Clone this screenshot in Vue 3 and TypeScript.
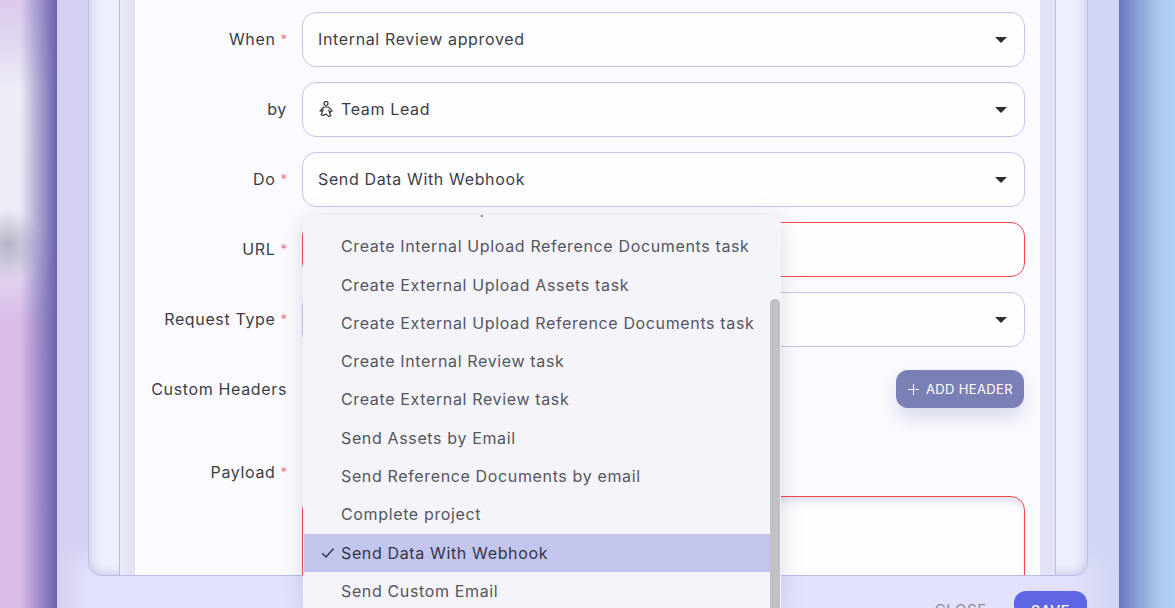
<script setup lang="ts">
interface Field {
  label: string
  required: boolean
  value: string
  icon?: boolean
  caret: boolean
  invalid?: boolean
}

const fields: Field[] = [
  { label: 'When', required: true, value: 'Internal Review approved', caret: true },
  { label: 'by', required: false, value: 'Team Lead', icon: true, caret: true },
  { label: 'Do', required: true, value: 'Send Data With Webhook', caret: true },
  { label: 'URL', required: true, value: '', caret: false, invalid: true },
  { label: 'Request Type', required: true, value: '', caret: true },
]

const options: string[] = [
  'Create Internal Upload Assets task',
  'Create Internal Upload Reference Documents task',
  'Create External Upload Assets task',
  'Create External Upload Reference Documents task',
  'Create Internal Review task',
  'Create External Review task',
  'Send Assets by Email',
  'Send Reference Documents by email',
  'Complete project',
  'Send Data With Webhook',
  'Send Custom Email',
]
const selected = 'Send Data With Webhook'
</script>

<template>
  <div class="page">
    <div class="backdrop-left"></div>
    <div class="modal">
      <div class="panel">
        <div class="gutter">
          <div class="card">
            <div v-for="f in fields" :key="f.label" class="row">
              <div class="label">
                {{ f.label }}<span v-if="f.required" class="req">*</span>
              </div>
              <div class="control" :class="{ invalid: f.invalid }">
                <svg v-if="f.icon" class="person" viewBox="0 0 14 16" width="14" height="16" fill="none" stroke="#35353c" stroke-width="1.2">
                  <circle cx="7" cy="2.5" r="2" />
                  <path d="M4.4 6h5.2l3.4 3.9-1.7 1.3-1.2-1.2.6 2.2 1.1 2.5-1.9.9L7 12.9l-2.9 1.7-1.9-.9 1.1-2.5.6-2.2-1.2 1.2L1 9.9z" />
                </svg>
                <span class="value">{{ f.value }}</span>
                <span v-if="f.caret" class="caret"></span>
              </div>
            </div>

            <div class="row headers">
              <div class="label">Custom Headers</div>
              <div class="headers-body">
                <button class="add-btn" type="button">
                  <svg viewBox="0 0 14 14" width="13" height="13" fill="none" stroke="#fff" stroke-width="1.1">
                    <path d="M7 1v12M1 7h12" />
                  </svg>
                  ADD HEADER
                </button>
              </div>
            </div>

            <div class="row payload">
              <div class="label">Payload<span class="req">*</span></div>
              <div class="editor"></div>
            </div>
          </div>
        </div>
      </div>
      <div class="footer">
        <span class="close">CLOSE</span>
        <button class="save" type="button">SAVE</button>
      </div>

      <div class="menu">
        <ul class="menu-list">
          <li v-for="o in options" :key="o" class="option" :class="{ active: o === selected }">
            <svg v-if="o === selected" class="check" viewBox="0 0 14 12" width="14" height="12" fill="none" stroke="#34344a" stroke-width="1.5">
              <path d="M1.2 6.4 5 10 12.6 1.6" />
            </svg>
            {{ o }}
          </li>
        </ul>
        <div class="thumb"></div>
      </div>
    </div>
    <div class="backdrop-right"></div>
  </div>
</template>

<style>
html, body { margin: 0; overflow: hidden; }
</style>

<style scoped>
.page {
  display: flex;
  width: 1175px;
  height: 608px;
  overflow: hidden;
  font-family: "Inter", "Open Sans", sans-serif;
  letter-spacing: 0.64px;
  color: #3d3d47;
}
.backdrop-left {
  width: 57px;
  flex: none;
  background:
    linear-gradient(90deg, rgba(106, 98, 173, 0) 35%, #6a62ad 100%),
    radial-gradient(34px 36px at 8px 245px, #b4b4c6, rgba(185, 185, 201, 0) 100%),
    linear-gradient(180deg, #dccbec 0, #e0d6f0 40px, #efecf7 90px, #ecebf6 230px, #e2d6ef 270px, #d9bce8 320px, #d9bbe8 100%);
}
.backdrop-right {
  width: 56px;
  flex: none;
  background: linear-gradient(90deg, #6576bb 0, #8ba2d6 35%, #aecbee 75%, #aed2f2 100%);
}
.modal {
  position: relative;
  flex: none;
  width: 1062px;
  display: flex;
  flex-direction: column;
  background:
    linear-gradient(90deg, #d4d0f1 0, rgba(212, 208, 241, 0) 32px),
    linear-gradient(270deg, #cfd5f3 0, rgba(207, 213, 243, 0) 50px),
    linear-gradient(180deg, rgba(226, 226, 252, 0) 0, rgba(226, 226, 252, 0) 540px, #e3e2fc 578px),
    linear-gradient(90deg, #d4d0f1 0, #d0d6f3 100%);
}
.panel {
  height: 596px;
  flex: none;
  margin: -20px 31px 0;
  box-sizing: border-box;
  border: 1px solid #bcbce8;
  border-top: 0;
  border-radius: 0 0 14px 14px;
  background: #eef0fd;
  box-shadow: inset 0 0 12px rgba(150, 150, 205, 0.55);
  padding: 0 31px 0 30px;
  overflow: hidden;
}
.gutter {
  height: 100%;
  box-sizing: border-box;
  border-left: 1px solid #bcbce8;
  border-right: 1px solid #bcbce8;
  background: linear-gradient(90deg, #e8e9fa 0, #dfe1f5 15px, #e0e2f6 100%);
  padding: 0 15px;
}
.card {
  height: 100%;
  box-sizing: border-box;
  background: #fbfbff;
  padding: 32px 15px 0 0;
  overflow: hidden;
}
.row {
  display: flex;
  gap: 15px;
  margin-bottom: 15px;
}
.label {
  width: 152px;
  flex: none;
  text-align: right;
  font-size: 16px;
  line-height: 55px;
  white-space: nowrap;
}
.req {
  color: #f2788a;
  font-size: 13px;
  margin-left: 5px;
  vertical-align: 1px;
  letter-spacing: 0;
}
.control {
  flex: 1;
  height: 55px;
  box-sizing: border-box;
  display: flex;
  align-items: center;
  padding: 0 15px 2px;
  background: #fffeff;
  border: 1px solid #c3c4ee;
  border-radius: 14px;
  font-size: 16px;
}
.control.invalid { border-color: #f5484d; }
.person { margin: 0 8px 0 1px; flex: none; }
.value { flex: 1; white-space: nowrap; }
.caret {
  width: 0;
  height: 0;
  margin: 2px 2px 0 0;
  border-left: 6px solid transparent;
  border-right: 6px solid transparent;
  border-top: 6px solid #2c2c30;
}
.headers { margin: 0; height: 83px; }
.headers .label { line-height: 38px; margin-top: 8px; }
.headers-body {
  flex: 1;
  display: flex;
  justify-content: flex-end;
  padding: 8px 1px 0 0;
  align-items: flex-start;
}
.add-btn {
  display: flex;
  align-items: center;
  gap: 6px;
  height: 38px;
  width: 128px;
  box-sizing: border-box;
  justify-content: center;
  padding: 0;
  border: 0;
  border-radius: 12px;
  background: #7a80b6;
  color: #fff;
  font-family: inherit;
  font-size: 13px;
  letter-spacing: 0.35px;
  box-shadow: 0 10px 20px rgba(122, 128, 182, 0.28);
}
.payload { margin: 0; }
.payload .label { line-height: 22px; margin-top: 16px; }
.editor {
  flex: 1;
  height: 200px;
  margin-top: 51px;
  box-sizing: border-box;
  border: 1px solid #f5484d;
  border-radius: 14px;
  background: #fefeff;
  box-shadow: inset 0 8px 12px -6px rgba(120, 120, 180, 0.35);
}
.footer {
  flex: 1;
  display: flex;
  justify-content: flex-end;
  align-items: flex-start;
  gap: 27px;
  padding: 15px 32px 0 0;
}
.close {
  font-size: 15px;
  line-height: 38px;
  color: #8a8a94;
}
.save {
  width: 73px;
  height: 38px;
  border: 0;
  border-radius: 12px;
  background: #5f66e6;
  color: #fff;
  font-family: inherit;
  font-size: 14px;
  font-weight: 500;
  letter-spacing: inherit;
}
.menu {
  position: absolute;
  left: 246px;
  top: 215px;
  width: 478px;
  height: 393px;
  overflow: hidden;
  background: #f4f4fa;
  border-radius: 8px 8px 0 0;
  box-shadow: 0 4px 22px rgba(90, 90, 140, 0.22);
}
.menu-list {
  list-style: none;
  margin: -26px 0 0;
  padding: 0 11px 0 1px;
}
.option {
  position: relative;
  height: 38.3px;
  box-sizing: border-box;
  padding-left: 37px;
  font-size: 16px;
  line-height: 38.3px;
  color: #55555f;
  white-space: nowrap;
}
.option.active {
  background: #c3c6ec;
  color: #34344a;
}
.check {
  position: absolute;
  left: 17px;
  top: 13px;
}
.thumb {
  position: absolute;
  left: 467px;
  top: 84px;
  width: 10px;
  bottom: 0;
  background: #c1c0c5;
  border-radius: 5px 5px 0 0;
}
</style>
